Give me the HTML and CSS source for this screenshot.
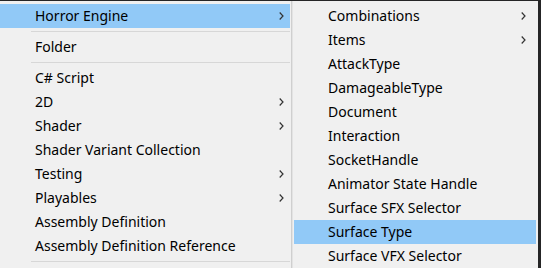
FILE: index.html
```html
<!DOCTYPE html>
<html lang="en">
<head>
  <meta charset="UTF-8" />
  <title>Create menu</title>
  <link rel="stylesheet" href="styles.css">
</head>
<body>

  <div class="menu main">
    <div class="item active">Horror Engine <svg class="arrow" viewBox="0 0 5 8"><path d="M0.7 0.5 L4 4 L0.7 7.5" /></svg></div>
    <div class="sep"></div>
    <div class="item">Folder</div>
    <div class="sep"></div>
    <div class="item">C# Script</div>
    <div class="item">2D <svg class="arrow" viewBox="0 0 5 8"><path d="M0.7 0.5 L4 4 L0.7 7.5" /></svg></div>
    <div class="item">Shader <svg class="arrow" viewBox="0 0 5 8"><path d="M0.7 0.5 L4 4 L0.7 7.5" /></svg></div>
    <div class="item">Shader Variant Collection</div>
    <div class="item">Testing <svg class="arrow" viewBox="0 0 5 8"><path d="M0.7 0.5 L4 4 L0.7 7.5" /></svg></div>
    <div class="item">Playables <svg class="arrow" viewBox="0 0 5 8"><path d="M0.7 0.5 L4 4 L0.7 7.5" /></svg></div>
    <div class="item">Assembly Definition</div>
    <div class="item">Assembly Definition Reference</div>
    <div class="sep"></div>
  </div>

  <div class="menu sub">
    <div class="item">Combinations <svg class="arrow" viewBox="0 0 5 8"><path d="M0.7 0.5 L4 4 L0.7 7.5" /></svg></div>
    <div class="item">Items <svg class="arrow" viewBox="0 0 5 8"><path d="M0.7 0.5 L4 4 L0.7 7.5" /></svg></div>
    <div class="item">AttackType</div>
    <div class="item">DamageableType</div>
    <div class="item">Document</div>
    <div class="item">Interaction</div>
    <div class="item">SocketHandle</div>
    <div class="item">Animator State Handle</div>
    <div class="item">Surface SFX Selector</div>
    <div class="item active">Surface Type</div>
    <div class="item">Surface VFX Selector</div>
  </div>

</body>
</html>
```

FILE: styles.css
```css
body {
  margin: 0;
  padding-top: 1px;
  height: 100vh;
  box-sizing: border-box;
  overflow: hidden;
  background-color: #252526;
  font-family: "Noto Sans", sans-serif;
  font-size: 14px;
  color: #000;
  display: flex;
}

.menu {
  background-color: #f0f0f0;
  padding: 3px 0;
  box-sizing: border-box;
  overflow: hidden;
}

.main {
  width: 292px;
  border-right: 1px solid #cfcfcf;
}

.sub {
  width: 246px;
  border-left: 1px solid #e3e3e3;
}

.item {
  height: 24px;
  line-height: 24px;
  display: flex;
  align-items: center;
  justify-content: space-between;
  white-space: nowrap;
}

.main .item {
  margin-right: 1px;
  padding: 0 6px 0 35px;
}

.sub .item {
  margin: 0 2px 0 1px;
  padding: 0 10px 0 34px;
}

.item.active {
  background-color: #91c9f7;
}

.arrow {
  width: 5px;
  height: 8px;
  fill: none;
  stroke: #333;
  stroke-width: 1.2;
}

.sep {
  height: 1px;
  margin: 3px 1px 3px 31px;
  background-color: #d7d7d7;
}
```
